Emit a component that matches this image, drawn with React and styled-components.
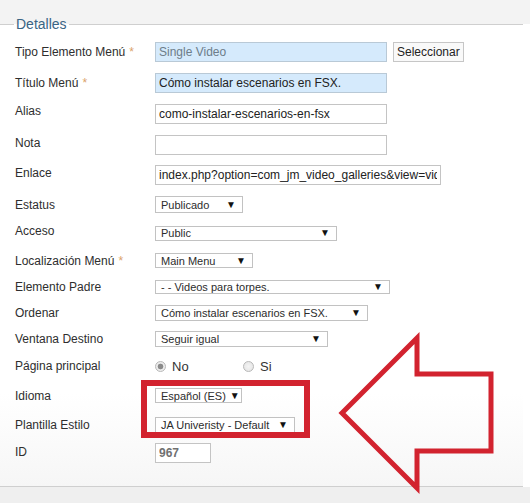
import React from "react";
import styled, { createGlobalStyle } from "styled-components";

const Global = createGlobalStyle`
  html, body { margin: 0; padding: 0; background: #ffffff; }
  body { font-family: "Liberation Sans", Arial, sans-serif; font-size: 12px; color: #333; }
`;

const Page = styled.div`
  position: relative;
  width: 530px;
  height: 503px;
  overflow: hidden;
  background: linear-gradient(#f3f3f3 0, #f3f3f3 24px, #ffffff 24px);
`;

const Fieldset = styled.fieldset`
  margin: 16px 0 0 0;
  width: 523px;
  box-sizing: border-box;
  padding: 5px 0 18px 15px;
  border: none;
  border-top: 1px solid #cfcfcf;
  border-bottom: 1px solid #cfcfcf;
  background: linear-gradient(#ffffff 0%, #ffffff 80%, #f6f6f6 100%);
`;

const Legend = styled.legend`
  margin-left: -1px;
  padding: 0 2px;
  font-size: 14px;
  line-height: 16px;
  color: #3a6585;
`;

const Row = styled.div`
  display: flex;
  align-items: center;
  height: ${(p) => p.$h}px;
`;

const Label = styled.div`
  width: 140px;
  flex: none;
  font-size: 12px;
  color: #2e2e2e;
  margin-top: ${(p) => p.$dy || 0}px;
`;

const Req = styled.span`
  color: #dba26a;
  margin-left: 4px;
`;

const Field = styled.div`
  display: flex;
  align-items: center;
  gap: 6px;
`;

const TextInput = styled.input`
  box-sizing: border-box;
  width: ${(p) => p.$w}px;
  height: 20px;
  margin: 0;
  padding: 0 3px;
  border: 1px solid ${(p) => (p.$tone ? "#b9c9d6" : "#c4c4c4")};
  background: ${(p) => (p.$tone ? "#d5eafc" : "#ffffff")};
  color: ${(p) => (p.$bold ? "#707070" : p.$muted ? "#6d7d8a" : "#222")};
  font-family: "Liberation Sans", Arial, sans-serif;
  font-size: 12px;
  font-weight: ${(p) => (p.$bold ? "bold" : "normal")};
  outline: none;
`;

const Button = styled.button`
  box-sizing: border-box;
  height: 20px;
  margin: 0;
  padding: 0 3px;
  border: 1px solid #c6c6c6;
  background: #f9f9f9;
  color: #222;
  font-family: "Liberation Sans", Arial, sans-serif;
  font-size: 12px;
`;

const Select = styled.div`
  box-sizing: border-box;
  width: ${(p) => p.$w}px;
  height: ${(p) => p.$h || 16}px;
  border: 1px solid #c2c2c2;
  background: #fff;
  display: flex;
  align-items: center;
  justify-content: space-between;
  padding: 0 6px 0 5px;
  font-size: 11px;
  color: #2c2c2c;
  white-space: nowrap;
`;

const Caret = styled.span`
  font-size: 10px;
  color: #111;
  line-height: 1;
  margin-left: 4px;
`;

const Radios = styled.div`
  display: flex;
  align-items: center;
  gap: 6px;
`;

const RadioItem = styled.label`
  display: flex;
  align-items: center;
  gap: 6px;
  font-size: 13px;
  color: #333;
  width: ${(p) => p.$w}px;
`;

const RadioDot = styled.span`
  box-sizing: border-box;
  width: 11px;
  height: 11px;
  border-radius: 50%;
  border: 1px solid #b8b8b8;
  background: radial-gradient(circle, ${(p) => (p.$on ? "#8a8a8a 0, #8a8a8a 2.5px, #ececec 3.2px" : "#f4f4f4 0, #e6e6e6 5px")});
`;

const Footer = styled.div`
  height: 40px;
  background: #efefef;
  width: 530px;
`;

const Overlay = styled.svg`
  position: absolute;
  left: 0;
  top: 0;
  pointer-events: none;
`;

const Sel = ({ w, h, children }) => (
  <Select $w={w} $h={h}>
    <span>{children}</span>
    <Caret>▼</Caret>
  </Select>
);

export default function App() {
  return (
    <>
      <Global />
      <Page>
        <Fieldset>
          <Legend>Detalles</Legend>
          <Row $h={30}>
            <Label>Tipo Elemento Menú<Req>*</Req></Label>
            <Field>
              <TextInput $w={232} $tone $muted readOnly value="Single Video" />
              <Button>Seleccionar</Button>
            </Field>
          </Row>
          <Row $h={31}>
            <Label>Título Menú<Req>*</Req></Label>
            <TextInput $w={232} $tone readOnly value="Cómo instalar escenarios en FSX." />
          </Row>
          <Row $h={31}>
            <Label $dy={-5}>Alias</Label>
            <TextInput $w={232} readOnly value="como-instalar-escenarios-en-fsx" />
          </Row>
          <Row $h={31}>
            <Label $dy={-4}>Nota</Label>
            <TextInput $w={232} readOnly value="" />
          </Row>
          <Row $h={30}>
            <Label $dy={-5}>Enlace</Label>
            <TextInput $w={286} readOnly value="index.php?option=com_jm_video_galleries&view=video&id=12" />
          </Row>
          <Row $h={29}>
            <Label>Estatus</Label>
            <Sel w={88} h={17}>Publicado</Sel>
          </Row>
          <Row $h={28}>
            <Label $dy={-4}>Acceso</Label>
            <Sel w={182} h={15}>Public</Sel>
          </Row>
          <Row $h={27}>
            <Label>Localización Menú<Req>*</Req></Label>
            <Sel w={98} h={15}>Main Menu</Sel>
          </Row>
          <Row $h={26}>
            <Label>Elemento Padre</Label>
            <Sel w={235} h={14}>- - Videos para torpes.</Sel>
          </Row>
          <Row $h={26}>
            <Label>Ordenar</Label>
            <Sel w={213} h={16}>Cómo instalar escenarios en FSX.</Sel>
          </Row>
          <Row $h={26}>
            <Label>Ventana Destino</Label>
            <Sel w={173} h={16}>Seguir igual</Sel>
          </Row>
          <Row $h={28}>
            <Label>Página principal</Label>
            <Radios>
              <RadioItem $w={82}><RadioDot $on />No</RadioItem>
              <RadioItem><RadioDot />Si</RadioItem>
            </Radios>
          </Row>
          <Row $h={31}>
            <Label>Idioma</Label>
            <Sel w={87} h={15}>Español (ES)</Sel>
          </Row>
          <Row $h={27}>
            <Label>Plantilla Estilo</Label>
            <Sel w={140} h={16}>JA Univeristy - Default</Sel>
          </Row>
          <Row $h={30}>
            <Label $dy={-3}>ID</Label>
            <TextInput $w={56} $bold readOnly value="967" />
          </Row>
        </Fieldset>
        <Footer />
        <Overlay width="530" height="503" viewBox="0 0 530 503">
          <rect x="144" y="383" width="163" height="52" fill="none" stroke="#d2232f" strokeWidth="6" />
          <polygon
            points="342,413 417,338 417,374 491,374 491,451 417,451 417,488"
            fill="none"
            stroke="#d2232f"
            strokeWidth="5"
            strokeLinejoin="miter"
          />
        </Overlay>
      </Page>
    </>
  );
}
